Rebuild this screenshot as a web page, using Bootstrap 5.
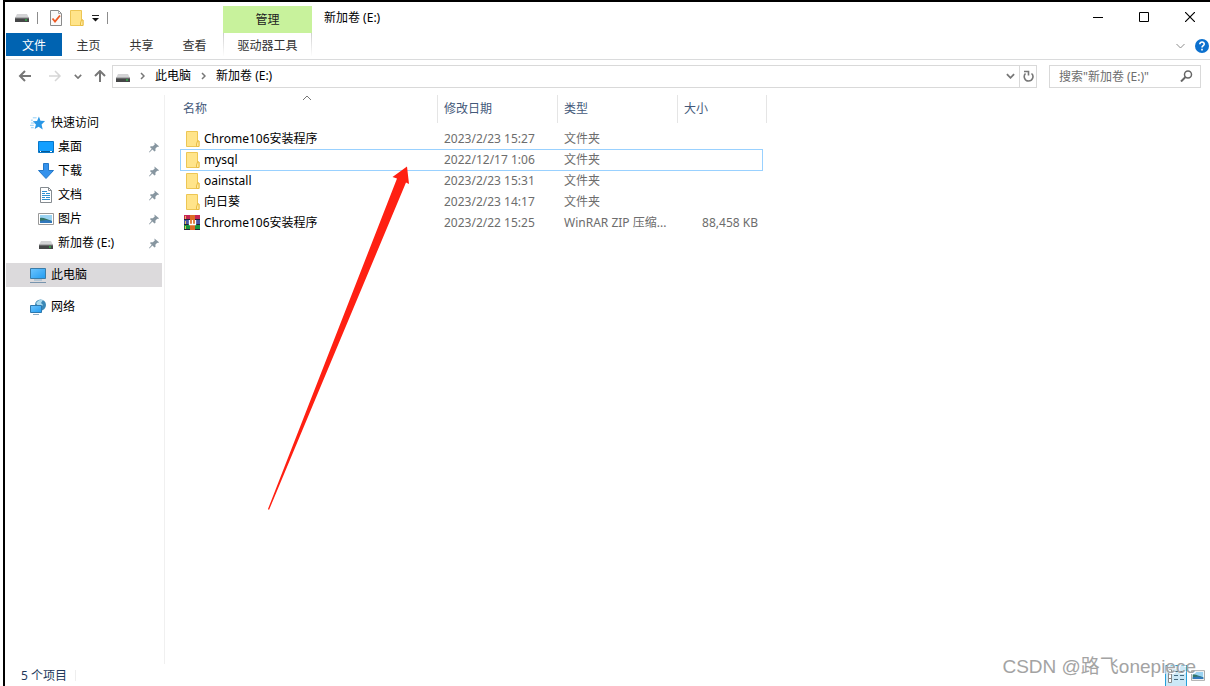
<!DOCTYPE html>
<html lang="zh-CN">
<head>
<meta charset="utf-8">
<meta name="viewport" content="width=device-width, initial-scale=1">
<title>新加卷 (E:)</title>
<link href="https://cdn.jsdelivr.net/npm/bootstrap@5.3.0/dist/css/bootstrap.min.css" rel="stylesheet">
<style>
body{font-family:"Noto Sans","Noto Sans CJK SC",sans-serif;font-size:12px;line-height:18px;color:#000;background:#fff}
svg{display:block;flex:none}
a{color:inherit;text-decoration:none}
button{background:none;border:0;padding:0;color:inherit;display:flex;align-items:center;justify-content:center}
.explorer{min-height:100vh;margin-left:3px;border-left:2px solid #000;border-top:2px solid #000;padding-left:1px}
.titlebar{height:31px}
.quick{width:217px;padding-left:9px;gap:8px}
.bar-sep{width:1px;height:12px;background:#8c8c8c}
.context-tab{width:89px;height:27px;background:#c8f29c;color:#222}
.win-controls{gap:6px}
.win-controls button{width:40px;height:30px}
.ribbon{height:27px;border-bottom:1px solid #dadbdc;color:#333}
.ribbon-tab{width:53px;height:23px;padding-top:2px}
.ribbon-tab.file-tab{width:56px;background:#0063b1;color:#fff}
.ribbon-tab.tool-tab{width:89px;margin-left:2px;border:solid;border-width:0 1px;border-image:linear-gradient(#ccc,#fff) 1}
.ribbon-end{gap:10px;padding-right:1px}
.address-row{height:32px;padding-right:9px}
.nav-buttons{width:106px;padding-left:12px}
.nav-buttons svg,.crumb-box button svg{color:#777}
.crumb-box,.search-box{height:23px;border:1px solid #d9d9d9}
.crumbs{padding-left:3px;gap:10px}
.refresh{width:17px;border-left:1px solid #d9d9d9;height:21px}
.search-box{width:152px;margin-left:12px;padding:0 7px 0 9px}
.search-box input{border:0;outline:0;padding:2px 0 0;width:100px;background:none}
.search-box input::placeholder{color:#6d6d6d;opacity:1}
.side-pane{width:159px;padding-top:16px;margin-top:3px;border-right:1px solid #f0f0f0}
.side-item{height:24px;margin-right:2px;padding:0 3px 0 24px;gap:5px}
.side-item.sub-item{padding-left:32px;gap:4px}
.side-item.current{background:#dcdadc}
.side-item.top-gap{margin-top:8px}
.files-pane{padding:3px 0 0 15px}
.file-table{table-layout:fixed;width:587px;border-collapse:separate;border-spacing:0}
.file-table th{height:28px;font-weight:400;color:#44597a;border-right:1px solid #e5e5e5;padding:0 6px}
.file-table th:first-child{padding-left:3px}
.file-table td{height:21px;padding:0 6px;color:#6d6d6d;white-space:nowrap}
.file-table td:first-child a{color:#000}
.file-table .size-cell{padding-right:5px}
.file-table tbody:before{content:"";display:block;height:5px}
.archive-icon{margin-left:-2px}
.chosen td:not(.edge-cell){border-top:1px solid #99d1ff;box-shadow:0 1px 0 #99d1ff}
.chosen td:first-child{border-left:1px solid #99d1ff;padding-left:5px}
.chosen .size-cell{border-right:1px solid #99d1ff}
.sort-mark{top:0;left:122px}
.pointer-arrow{left:100px;top:70px}
.status{height:22px;color:#1e395b;padding:1px 5px 0 15px}
.status .bar-sep{height:11px;background:#eee}
.view-details{width:22px;height:22px;background:#cce8f6;border:1px solid #26a0da;border-bottom:0}
.watermark{right:14px;bottom:7px;font:19px/24px "Liberation Sans","Noto Sans CJK SC",sans-serif;color:#a3a3a3;text-shadow:1px 1px 0 #fff;white-space:nowrap}
</style>
</head>
<body>
<svg width="0" height="0" class="position-absolute" aria-hidden="true">
  <defs>
    <linearGradient id="gBlue" x2="1" y2="1"><stop stop-color="#6cc5ff"/><stop offset="1" stop-color="#229cf0"/></linearGradient>
    <symbol id="drive" viewBox="0 0 14 8"><path d="M2 0h10l2 4H0z" fill="#d3d3d5"/><path d="M0 4h14v4H0z" fill="#454647"/><path d="M0 4h14" stroke="#87888a"/><path d="M10 5.500h2v1h-2z" fill="#27e649"/></symbol>
    <symbol id="folder" viewBox="0 0 14 16"><path d="M.5.500h11v9.500h1.500v5.500H.5z" fill="#ffe48a" stroke="#edc654"/><path d="M10.500 15.500V13l1-3H13v5.500z" fill="#ffeaa0" stroke="#e9bd42"/></symbol>
    <symbol id="pin" viewBox="0 0 11 11"><path d="M6 0l5 4-1 1-1-.3L7 7l.2 2.200L6 10 3.800 7.800 .5 11 0 10.500 3 7 1 5l1-1 2.300.2L6.500 2 6 1z" fill="#8796a0"/></symbol>
    <symbol id="picture" viewBox="0 0 16 12"><path d="M.5.500h15v11H.5z" fill="#fff" stroke="#999"/><path d="M2 2h12v8H2z" fill="#9bd3f2"/><path d="M2 5c3-1 6 1 12 3v2H2z" fill="#347566"/><path d="M2 8l6-1 6 1v2H2z" fill="#3077bb"/></symbol>
    <symbol id="down" viewBox="0 0 10 6"><path d="M1 1l4 4 4-4" fill="none" stroke="currentColor" stroke-width="2"/></symbol>
    <symbol id="next" viewBox="0 0 5 8"><path d="M1 1l3 3-3 3" fill="none" stroke="#777" stroke-width="1.500"/></symbol>
  </defs>
</svg>
<div class="explorer d-flex flex-column position-relative overflow-hidden">
  <header>
    <div class="titlebar d-flex align-items-end">
      <div class="quick d-flex align-items-center h-100">
        <svg width="14" height="8"><use href="#drive"/></svg>
        <span class="bar-sep"></span>
        <button class="ms-1" aria-label="属性"><svg width="12" height="16" viewBox="0 0 12 16"><path d="M.5.500h8l3 3v12H.5z" fill="#fafafa" stroke="#8b8b8b"/><path d="M8.500.500v3h3" fill="none" stroke="#aaa"/><path d="M2.500 8.500l2.500 3 5-6" fill="none" stroke="#ee5a24" stroke-width="1.800"/></svg></button>
        <button aria-label="新建文件夹"><svg width="14" height="16"><use href="#folder"/></svg></button>
        <button aria-label="自定义快速访问工具栏"><svg width="7" height="8"><path d="M0 1.500h7" stroke="#222"/><path d="M0 4h7L3.500 7.500z" fill="#111"/></svg></button>
        <span class="bar-sep"></span>
      </div>
      <div class="context-tab d-flex align-items-center justify-content-center">管理</div>
      <div class="align-self-center ms-2 ps-1">新加卷 (E:)</div>
      <div class="win-controls d-flex ms-auto align-self-start">
        <button aria-label="最小化"><svg width="10" height="10"><path d="M0 5.500h10" stroke="#000"/></svg></button>
        <button aria-label="最大化"><svg width="10" height="10"><path d="M.5.500h9v9h-9z" fill="none" stroke="#000"/></svg></button>
        <button aria-label="关闭"><svg width="10" height="10"><path d="M0 0l10 10M10 0L0 10" stroke="#000" stroke-width="1.200"/></svg></button>
      </div>
    </div>
    <div class="ribbon d-flex align-items-start">
      <button class="ribbon-tab file-tab">文件</button>
      <button class="ribbon-tab">主页</button>
      <button class="ribbon-tab">共享</button>
      <button class="ribbon-tab">查看</button>
      <button class="ribbon-tab tool-tab">驱动器工具</button>
      <div class="ribbon-end d-flex align-items-center align-self-center ms-auto">
        <button aria-label="展开功能区"><svg width="9" height="6"><path d="M.5 1l4 4 4-4" fill="none" stroke="#8c8c8c"/></svg></button>
        <button aria-label="帮助"><svg width="14" height="14" viewBox="0 0 14 14"><circle cx="7" cy="7" r="7" fill="#0b70ce"/><path d="M4.800 5.200c0-3 4.600-2.800 4.400 0C9.100 6.600 7 6.800 7 8.500M7 9.700v1.700" fill="none" stroke="#fff" stroke-width="1.600"/></svg></button>
      </div>
    </div>
    <div class="address-row d-flex align-items-center">
      <div class="nav-buttons d-flex align-items-center">
        <button aria-label="后退"><svg width="14" height="12"><path d="M7 1L2 6l5 5M2 6h11" fill="none" stroke="#777" stroke-width="2"/></svg></button>
        <button class="ms-3" aria-label="前进"><svg width="14" height="12"><path d="M7 1l5 5-5 5M12 6H1" fill="none" stroke="#d6d6d6" stroke-width="1.500"/></svg></button>
        <button class="ms-2 ps-1" aria-label="最近浏览的位置"><svg width="8" height="5"><use href="#down"/></svg></button>
        <button class="ms-2 ps-1" aria-label="上移"><svg width="12" height="12"><path d="M1 6l5-5 5 5M6 1v11" fill="none" stroke="#777" stroke-width="2"/></svg></button>
      </div>
      <div class="crumb-box d-flex align-items-center flex-grow-1">
        <nav class="crumbs d-flex align-items-center flex-grow-1" aria-label="地址">
          <svg width="14" height="8" class="mt-1"><use href="#drive"/></svg>
          <svg width="5" height="8"><use href="#next"/></svg>
          <a href="#">此电脑</a>
          <svg width="5" height="8"><use href="#next"/></svg>
          <a href="#">新加卷 (E:)</a>
        </nav>
        <button class="me-1" aria-label="以前的位置"><svg width="9" height="6"><use href="#down"/></svg></button>
        <button class="refresh" aria-label="刷新"><svg width="11" height="12"><path d="M2.500 3.500C0 6 1.500 11 5.500 11s6-5 3-7.500M1 1.500h4.500v4" fill="none" stroke="#777" stroke-width="1.600"/></svg></button>
      </div>
      <div class="search-box d-flex align-items-center justify-content-between">
        <input type="text" aria-label="搜索" placeholder='搜索"新加卷 (E:)"'>
        <button aria-label="开始搜索"><svg width="13" height="12"><circle cx="8" cy="4.500" r="3.500" fill="none" stroke="#666" stroke-width="1.500"/><path d="M5.500 7L1 11.500" stroke="#666" stroke-width="2"/></svg></button>
      </div>
    </div>
  </header>
  <main class="d-flex flex-grow-1">
    <nav class="side-pane flex-shrink-0" aria-label="导航窗格">
      <a href="#" class="side-item d-flex align-items-center"><svg width="16" height="14" viewBox="0 0 17 14"><path d="M9.500 0l1.600 4.500L16 5l-3.700 3.500L13.500 14l-4.400-3L5 13.500l1.300-5L3 5.200l4.500-.4z" fill="#2997e6"/><path d="M3 1.500h4M1 4h2M1 7h4M0 9.500h4M1 12h3" stroke="#8dccf5"/></svg><span>快速访问</span></a>
      <a href="#" class="side-item sub-item d-flex align-items-center"><svg width="16" height="12"><path d="M.5.500h15v11H.5z" fill="#139fff" stroke="#0877c9"/><path d="M1 10.500h14" stroke="#075994"/><path d="M2 10.500h1M12 10.500h2" stroke="#fff"/></svg><span>桌面</span><svg class="ms-auto" width="10" height="11"><use href="#pin"/></svg></a>
      <a href="#" class="side-item sub-item d-flex align-items-center"><svg width="16" height="16"><path d="M5.500.500h5v7h5L8 15.500.5 7.500h5z" fill="#3592ec" stroke="#2478c8"/></svg><span>下载</span><svg class="ms-auto" width="10" height="11"><use href="#pin"/></svg></a>
      <a href="#" class="side-item sub-item d-flex align-items-center"><svg width="16" height="16"><path d="M2.500.500h8l3 3v12h-11z" fill="#fff" stroke="#858b90"/><path d="M10.500.500v3h3" fill="none" stroke="#858b90"/><path d="M4 4.500h5M4 6.500h3M8 6.500h4M4 8.500h8M4 10.500h3M8 10.500h4M4 12.500h8" stroke="#2f91d0"/></svg><span>文档</span><svg class="ms-auto" width="10" height="11"><use href="#pin"/></svg></a>
      <a href="#" class="side-item sub-item d-flex align-items-center"><svg width="16" height="12"><use href="#picture"/></svg><span>图片</span><svg class="ms-auto" width="10" height="11"><use href="#pin"/></svg></a>
      <a href="#" class="side-item sub-item d-flex align-items-center"><svg width="16" height="8" class="mt-1"><use href="#drive"/></svg><span>新加卷 (E:)</span><svg class="ms-auto" width="10" height="11"><use href="#pin"/></svg></a>
      <a href="#" class="side-item current top-gap d-flex align-items-center"><svg width="16" height="15"><path d="M.5.500h15v10H.5z" fill="url(#gBlue)" stroke="#3b7ca7"/><path d="M4 12h8" stroke="#8ab3cf"/><path d="M0 14.500h16" stroke="#7894ad"/></svg><span>此电脑</span></a>
      <a href="#" class="side-item top-gap d-flex align-items-center"><svg width="16" height="16"><circle cx="10.500" cy="6" r="5.500" fill="#3b88b6"/><path d="M6 4c2-3 5-4 7-3l-2 3 2 2-4 3z" fill="#a9d9ed"/><path d="M.5 6.500h11v7H.5z" fill="url(#gBlue)" stroke="#2e78ad"/><path d="M3 15.500h6" stroke="#8bacc4"/></svg><span>网络</span></a>
    </nav>
    <section class="files-pane flex-grow-1 position-relative">
      <table class="file-table">
        <colgroup><col width="258"><col width="120"><col width="120"><col width="85"><col width="4"></colgroup>
        <thead><tr>
          <th scope="col" class="position-relative">名称<svg class="sort-mark position-absolute" width="10" height="6"><path d="M1 5l4-4 4 4" fill="none" stroke="#777"/></svg></th>
          <th scope="col">修改日期</th><th scope="col">类型</th><th scope="col" colspan="2">大小</th>
        </tr></thead>
        <tbody>
          <tr><td><a href="#" class="d-flex align-items-center gap-1"><svg width="14" height="16"><use href="#folder"/></svg>Chrome106安装程序</a></td><td>2023/2/23 15:27</td><td>文件夹</td><td class="size-cell"></td><td class="edge-cell p-0"></td></tr>
          <tr class="chosen"><td><a href="#" class="d-flex align-items-center gap-1"><svg width="14" height="16"><use href="#folder"/></svg>mysql</a></td><td>2022/12/17 1:06</td><td>文件夹</td><td class="size-cell"></td><td class="edge-cell p-0"></td></tr>
          <tr><td><a href="#" class="d-flex align-items-center gap-1"><svg width="14" height="16"><use href="#folder"/></svg>oainstall</a></td><td>2023/2/23 15:31</td><td>文件夹</td><td class="size-cell"></td><td class="edge-cell p-0"></td></tr>
          <tr><td><a href="#" class="d-flex align-items-center gap-1"><svg width="14" height="16"><use href="#folder"/></svg>向日葵</a></td><td>2023/2/23 14:17</td><td>文件夹</td><td class="size-cell"></td><td class="edge-cell p-0"></td></tr>
          <tr><td><a href="#" class="d-flex align-items-center gap-1"><svg class="archive-icon" width="16" height="15"><path d="M0 0h16v5H0z" fill="#c52555"/><path d="M0 5h16v5H0z" fill="#4655a5"/><path d="M0 10h16v5H0z" fill="#16943e"/><path d="M0 4.500h16M0 9.500h16M0 14.500h16" stroke="#26213b"/><path d="M1.500 1v3M1.500 6v3M1.500 11v3" stroke="#e8c354"/><path d="M6 0h5v15H6z" fill="#dc6c25"/><path d="M5.500 5v4.500h6V5M8.500 5v4" fill="none" stroke="#fff" stroke-width="1.300"/></svg>Chrome106安装程序</a></td><td>2023/2/22 15:25</td><td>WinRAR ZIP 压缩...</td><td class="size-cell text-end">88,458 KB</td><td class="edge-cell p-0"></td></tr>
        </tbody>
      </table>
      <svg class="pointer-arrow position-absolute" width="150" height="350" viewBox="0 0 150 350" aria-hidden="true"><path d="M142 4.500L127.500 15l4.500 1.500L3 347l1 1L141 20.500l3 1.500z" fill="#ff2012"/></svg>
    </section>
  </main>
  <footer class="status d-flex align-items-center">
    <span>5 个项目</span>
    <span class="bar-sep ms-2"></span>
    <div class="d-flex align-items-center ms-auto gap-1">
      <button class="view-details" aria-label="详细信息"><svg width="16" height="14"><path d="M.5.500h3v13h-3zM.5 5h3M.5 9.500h3" fill="#fff" stroke="#888"/><path d="M6 2.500h4M12 2.500h4M6 6.500h4M12 6.500h4M6 10.500h4M12 10.500h4" stroke="#456b80"/></svg></button>
      <button aria-label="大图标"><svg width="14" height="11"><use href="#picture"/></svg></button>
    </div>
  </footer>
  <div class="watermark position-absolute pe-none">CSDN @路飞onepiece</div>
</div>
<script src="https://cdn.jsdelivr.net/npm/bootstrap@5.3.0/dist/js/bootstrap.bundle.min.js"></script>
</body>
</html>
